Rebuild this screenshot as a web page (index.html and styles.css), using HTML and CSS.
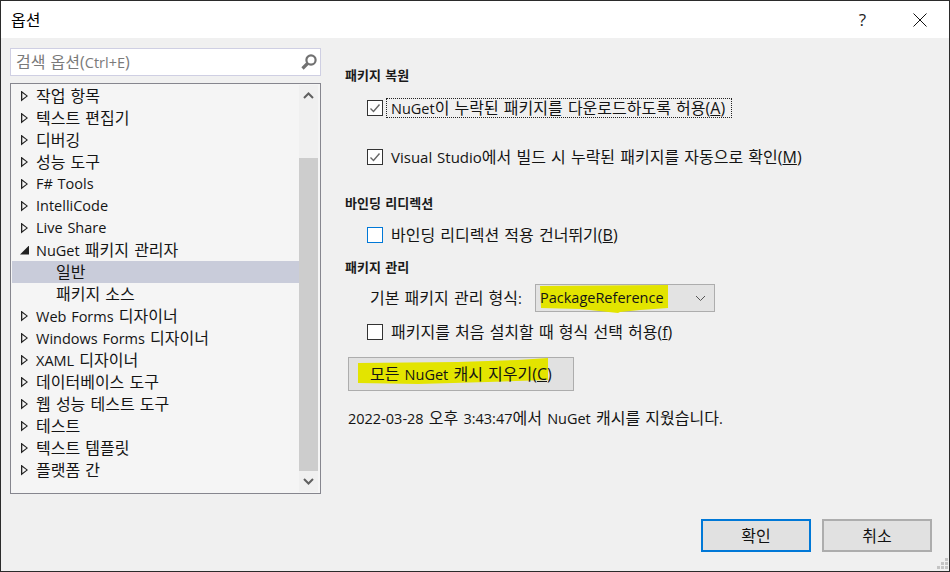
FILE: index.html
```html
<!DOCTYPE html>
<html lang="ko">
<head>
<meta charset="utf-8">
<title>옵션</title>
<link rel="stylesheet" href="styles.css">
</head>
<body>
<div class="window">
  <header class="titlebar">
    <span class="title">옵션</span>
    <span class="help">?</span>
    <svg class="close" width="16" height="16" viewBox="0 0 16 16"><path d="M1.5 1.5l13 13M14.5 1.5l-13 13" stroke="#111" stroke-width="1" fill="none"/></svg>
  </header>
  <main class="content">
    <section class="left">
      <div class="search">
        <span class="search-text">검색 옵션(<span class="lat">Ctrl+E</span>)</span>
        <svg width="18" height="18" viewBox="0 0 18 18"><circle cx="11" cy="7" r="4.6" fill="none" stroke="#717171" stroke-width="2.2"/><path d="M7.5 10.5L2.5 15.5" stroke="#717171" stroke-width="3.2"/></svg>
      </div>
      <div class="tree">
        <ul class="rows">
          <li class="row"><i class="tri"></i><span>작업 항목</span></li>
          <li class="row"><i class="tri"></i><span>텍스트 편집기</span></li>
          <li class="row"><i class="tri"></i><span>디버깅</span></li>
          <li class="row"><i class="tri"></i><span>성능 도구</span></li>
          <li class="row"><i class="tri"></i><span class="lat">F# Tools</span></li>
          <li class="row"><i class="tri"></i><span class="lat">IntelliCode</span></li>
          <li class="row"><i class="tri"></i><span class="lat">Live Share</span></li>
          <li class="row"><i class="tri open"></i><span><span class="lat">NuGet</span> 패키지 관리자</span></li>
          <li class="row child selected"><span>일반</span></li>
          <li class="row child"><span>패키지 소스</span></li>
          <li class="row"><i class="tri"></i><span><span class="lat">Web Forms</span> 디자이너</span></li>
          <li class="row"><i class="tri"></i><span><span class="lat">Windows Forms</span> 디자이너</span></li>
          <li class="row"><i class="tri"></i><span><span class="lat">XAML</span> 디자이너</span></li>
          <li class="row"><i class="tri"></i><span>데이터베이스 도구</span></li>
          <li class="row"><i class="tri"></i><span>웹 성능 테스트 도구</span></li>
          <li class="row"><i class="tri"></i><span>테스트</span></li>
          <li class="row"><i class="tri"></i><span>텍스트 템플릿</span></li>
          <li class="row"><i class="tri"></i><span>플랫폼 간</span></li>
        </ul>
        <div class="scrollbar">
          <svg class="arrow" width="19" height="21" viewBox="0 0 19 21"><path d="M5 13l4.5-4.5L14 13" fill="none" stroke="#606060" stroke-width="2"/></svg>
          <div class="track"><div class="thumb"></div></div>
          <svg class="arrow" width="19" height="21" viewBox="0 0 19 21"><path d="M5 8l4.5 4.5L14 8" fill="none" stroke="#606060" stroke-width="2"/></svg>
        </div>
      </div>
    </section>
    <section class="right">
      <h2 class="head first">패키지 복원</h2>
      <div class="check-row r1">
        <i class="box"><svg width="14" height="14" viewBox="0 0 14 14"><path d="M2.5 7.5l3 3 6-7" fill="none" stroke="#666" stroke-width="1.4"/></svg></i>
        <span class="focus"><span class="lat">NuGet</span>이 누락된 패키지를 다운로드하도록 허용(<u>A</u>)</span>
      </div>
      <div class="check-row r2">
        <i class="box"><svg width="14" height="14" viewBox="0 0 14 14"><path d="M2.5 7.5l3 3 6-7" fill="none" stroke="#666" stroke-width="1.4"/></svg></i>
        <span class="label"><span class="lat wide">Visual Studio</span>에서 빌드 시 누락된 패키지를 자동으로 확인(<u>M</u>)</span>
      </div>
      <h2 class="head second">바인딩 리디렉션</h2>
      <div class="check-row r3">
        <i class="box blue"></i>
        <span class="label">바인딩 리디렉션 적용 건너뛰기(<u>B</u>)</span>
      </div>
      <h2 class="head third">패키지 관리</h2>
      <div class="format-row">
        <span class="format-label">기본 패키지 관리 형식<span class="lat">:</span></span>
        <div class="combo">
          <svg class="mark mark-combo" width="128" height="28" viewBox="0 0 128 28"><path d="M0 1L128 0L128 23L100 25L80 27L78 28L40 24L1 23Z" fill="#e3e400"/></svg>
          <span class="combo-text lat">PackageReference</span>
          <svg class="chev" width="11" height="7" viewBox="0 0 11 7"><path d="M1 1l4.5 4.5L10 1" fill="none" stroke="#555" stroke-width="1"/></svg>
        </div>
      </div>
      <div class="check-row r4">
        <i class="box"></i>
        <span class="label">패키지를 처음 설치할 때 형식 선택 허용(<u>f</u>)</span>
      </div>
      <button class="clear" type="button">
        <svg class="mark mark-clear" width="191" height="28" viewBox="0 0 191 28"><path d="M0 5L100 4L160 2L190 0L190 22L130 24L60 26L0 25Z" fill="#e3e400"/></svg>
        <span class="clear-text">모든 <span class="lat">NuGet</span> 캐시 지우기(<u>C</u>)</span>
      </button>
      <p class="status"><span class="lat">2022-03-28</span> 오후 <span class="lat">3:43:47</span>에서 <span class="lat">NuGet</span> 캐시를 지웠습니다<span class="lat">.</span></p>
      <div class="actions">
        <button class="btn ok" type="button">확인</button>
        <button class="btn" type="button">취소</button>
      </div>
    </section>
  </main>
  <svg class="grip" width="11" height="11" viewBox="0 0 11 11"><path d="M8 0h3v3H8zM4 4h3v3H4zM8 4h3v3H8zM0 8h3v3H0zM4 8h3v3H4zM8 8h3v3H8z" fill="#c4c4c4"/></svg>
</div>
</body>
</html>
```

FILE: styles.css
```css
* { box-sizing: border-box; }
html, body { margin: 0; padding: 0; }
body {
  width: 950px;
  height: 572px;
  overflow: hidden;
  font-family: "Open Sans", "Noto Sans CJK KR", sans-serif;
  font-size: 16px;
  line-height: 20px;
  word-spacing: 1px;
  color: #141414;
}
.lat { font-size: 14.5px; }
.wide { font-size: 15px; }
.window {
  position: relative;
  width: 950px;
  height: 572px;
  display: flex;
  flex-direction: column;
  background: #f0f0f0;
  border: 1px solid #2b2b2b;
}
.titlebar {
  height: 37px;
  flex: none;
  display: flex;
  align-items: center;
  background: #fff;
  padding-left: 10px;
}
.title { color: #000; flex: 1; }
.help { font-size: 17px; color: #222; margin-right: 46px; }
.close { margin-right: 21px; }
.content { flex: 1; display: flex; min-height: 0; }
.left { width: 311px; margin-left: 9px; padding-top: 10px; flex: none; }
.search {
  height: 28px;
  display: flex;
  align-items: center;
  justify-content: space-between;
  background: #fff;
  border: 1px solid #cfcfe3;
  padding: 0 2px 0 5px;
}
.search-text { color: #7a7a7a; }
.tree {
  height: 411px;
  margin-top: 7px;
  display: flex;
  background: #f5f5f5;
  border: 1px solid #86868e;
  padding: 1px 2px 1px 1px;
}
.rows { list-style: none; margin: 0; padding: 0; flex: 1; }
.row {
  height: 22px;
  display: flex;
  align-items: center;
  padding-left: 9px;
  white-space: nowrap;
}
.tri {
  width: 7px;
  height: 11px;
  flex: none;
  margin-right: 8px;
  background: #222;
  clip-path: polygon(0 0, 100% 50%, 0 100%, 0 0, 1.3px 2.5px, 1.3px 8.5px, 5.4px 5.5px, 1.3px 2.5px);
}
.tri.open {
  width: 9px;
  height: 9px;
  margin-left: -1px;
  margin-right: 7px;
  clip-path: polygon(100% 0, 100% 100%, 0 100%);
}
.child { padding-left: 44px; }
.selected { background: #c9ccda; }
.scrollbar { width: 19px; flex: none; display: flex; flex-direction: column; background: #f0f0f0; }
.arrow { flex: none; }
.track { flex: 1; padding-top: 52px; }
.thumb { height: 100%; background: #cdcdcd; }
.right { flex: 1; position: relative; padding-left: 24px; padding-top: 28px; }
.head { margin: 0; font-size: 13px; font-weight: 700; line-height: 18px; height: 18px; color: #1a1a1a; }
.second { margin-top: 27px; }
.third { margin-top: 13px; }
.check-row { display: flex; align-items: center; height: 20px; margin-left: 22px; }
.r1 { margin-top: 14px; }
.r2 { margin-top: 29px; }
.r3 { margin-top: 13px; }
.r4 { margin-top: 10px; }
.box {
  width: 16px;
  height: 16px;
  flex: none;
  display: flex;
  align-items: center;
  justify-content: center;
  background: #fff;
  border: 1px solid #333;
}
.box.blue { border-color: #0078d7; }
.focus { margin-left: 3px; padding: 0 1px 0 4px; height: 20px; line-height: 18px; border: 1px dotted #222; width: 346px; white-space: nowrap; }
.label { margin-left: 8px; white-space: nowrap; }
.format-row { display: flex; align-items: center; height: 28px; margin-top: 8px; margin-left: 25px; }
.format-label { width: 165px; white-space: nowrap; }
.combo {
  position: relative;
  width: 180px;
  height: 28px;
  display: flex;
  align-items: center;
  justify-content: space-between;
  background: #e3e3e3;
  border: 1px solid #adadad;
  padding: 0 8px 0 4px;
}
.combo-text, .clear-text { position: relative; }
.mark { position: absolute; }
.mark-combo { left: 4px; top: 0; }
.chev { position: relative; }
.clear {
  display: block;
  position: relative;
  width: 226px;
  height: 34px;
  margin: 15px 0 0 3px;
  padding: 0 0 0 21px;
  text-align: left;
  font: inherit;
  word-spacing: inherit;
  color: inherit;
  background: #e1e1e1;
  border: 1px solid #adadad;
}
.mark-clear { left: 9px; top: 0; }
.status { margin: 17px 0 0 3px; white-space: nowrap; }
.actions { position: absolute; right: 17px; top: 481px; display: flex; gap: 11px; }
.btn {
  width: 110px;
  height: 33px;
  font: inherit;
  color: #111;
  background: #e1e1e1;
  border: 2px solid #adadad;
}
.btn.ok { border-color: #0078d7; }
.grip { position: absolute; right: 1px; bottom: 2px; }
```
